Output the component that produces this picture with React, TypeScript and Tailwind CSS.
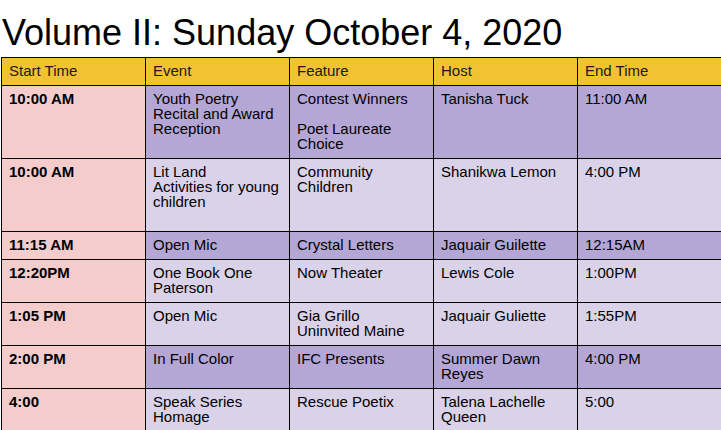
const rows = [
  {
    start: "10:00 AM",
    event: ["Youth Poetry", "Recital and Award", "Reception"],
    feature: ["Contest Winners", "", "Poet Laureate", "Choice"],
    host: ["Tanisha Tuck"],
    end: "11:00 AM",
    dark: true,
  },
  {
    start: "10:00 AM",
    event: ["Lit Land", "Activities for young", "children"],
    feature: ["Community", "Children"],
    host: ["Shanikwa Lemon"],
    end: "4:00 PM",
    dark: false,
  },
  {
    start: "11:15 AM",
    event: ["Open Mic"],
    feature: ["Crystal Letters"],
    host: ["Jaquair Guilette"],
    end: "12:15AM",
    dark: true,
  },
  {
    start: "12:20PM",
    event: ["One Book One", "Paterson"],
    feature: ["Now Theater"],
    host: ["Lewis Cole"],
    end: "1:00PM",
    dark: false,
  },
  {
    start: "1:05 PM",
    event: ["Open Mic"],
    feature: ["Gia Grillo", "Uninvited Maine"],
    host: ["Jaquair Guliette"],
    end: "1:55PM",
    dark: false,
  },
  {
    start: "2:00 PM",
    event: ["In Full Color"],
    feature: ["IFC Presents"],
    host: ["Summer Dawn", "Reyes"],
    end: "4:00 PM",
    dark: true,
  },
  {
    start: "4:00",
    event: ["Speak Series", "Homage"],
    feature: ["Rescue Poetix"],
    host: ["Talena Lachelle", "Queen"],
    end: "5:00",
    dark: false,
  },
];

const headers = ["Start Time", "Event", "Feature", "Host", "End Time"];

function Lines({ lines }: { lines: string[] }) {
  return (
    <>
      {lines.map((l, i) => (
        <div key={i} className="h-[15px] whitespace-nowrap">
          {l}
        </div>
      ))}
    </>
  );
}

export default function App() {
  return (
    <div
      className="w-[721px] h-[430px] overflow-hidden bg-white text-black"
      style={{ fontFamily: '"Liberation Sans", Arial, sans-serif' }}
    >
      <h1 className="pl-[2px] pt-[11px] pb-[3px] text-[36px] leading-[43px] font-normal whitespace-nowrap">
        Volume II: Sunday October 4, 2020
      </h1>
      <div className="ml-[1px] w-[722px] grid grid-cols-[144px_144px_144px_144px_144px] grid-rows-[28px_73px_73px_28px_43px_43px_43px_43px] border-t border-l border-black text-[15px] leading-[15px]">
        {headers.map((h) => (
          <div
            key={h}
            className="bg-[#f1c232] border-r border-b border-black px-[7px] pt-[5px] text-[#1a1a1a]"
          >
            {h}
          </div>
        ))}
        {rows.map((r, i) => {
          const bg = r.dark ? "bg-[#b4a7d6]" : "bg-[#d9d2e9]";
          return [
            <div
              key={`${i}-s`}
              className="bg-[#f4cccc] border-r border-b border-black px-[7px] pt-[5px] font-bold"
            >
              {r.start}
            </div>,
            <div key={`${i}-e`} className={`${bg} border-r border-b border-black px-[7px] pt-[5px]`}>
              <Lines lines={r.event} />
            </div>,
            <div key={`${i}-f`} className={`${bg} border-r border-b border-black px-[7px] pt-[5px]`}>
              <Lines lines={r.feature} />
            </div>,
            <div key={`${i}-h`} className={`${bg} border-r border-b border-black px-[7px] pt-[5px]`}>
              <Lines lines={r.host} />
            </div>,
            <div key={`${i}-t`} className={`${bg} border-r border-b border-black px-[7px] pt-[5px]`}>
              {r.end}
            </div>,
          ];
        })}
      </div>
    </div>
  );
}
